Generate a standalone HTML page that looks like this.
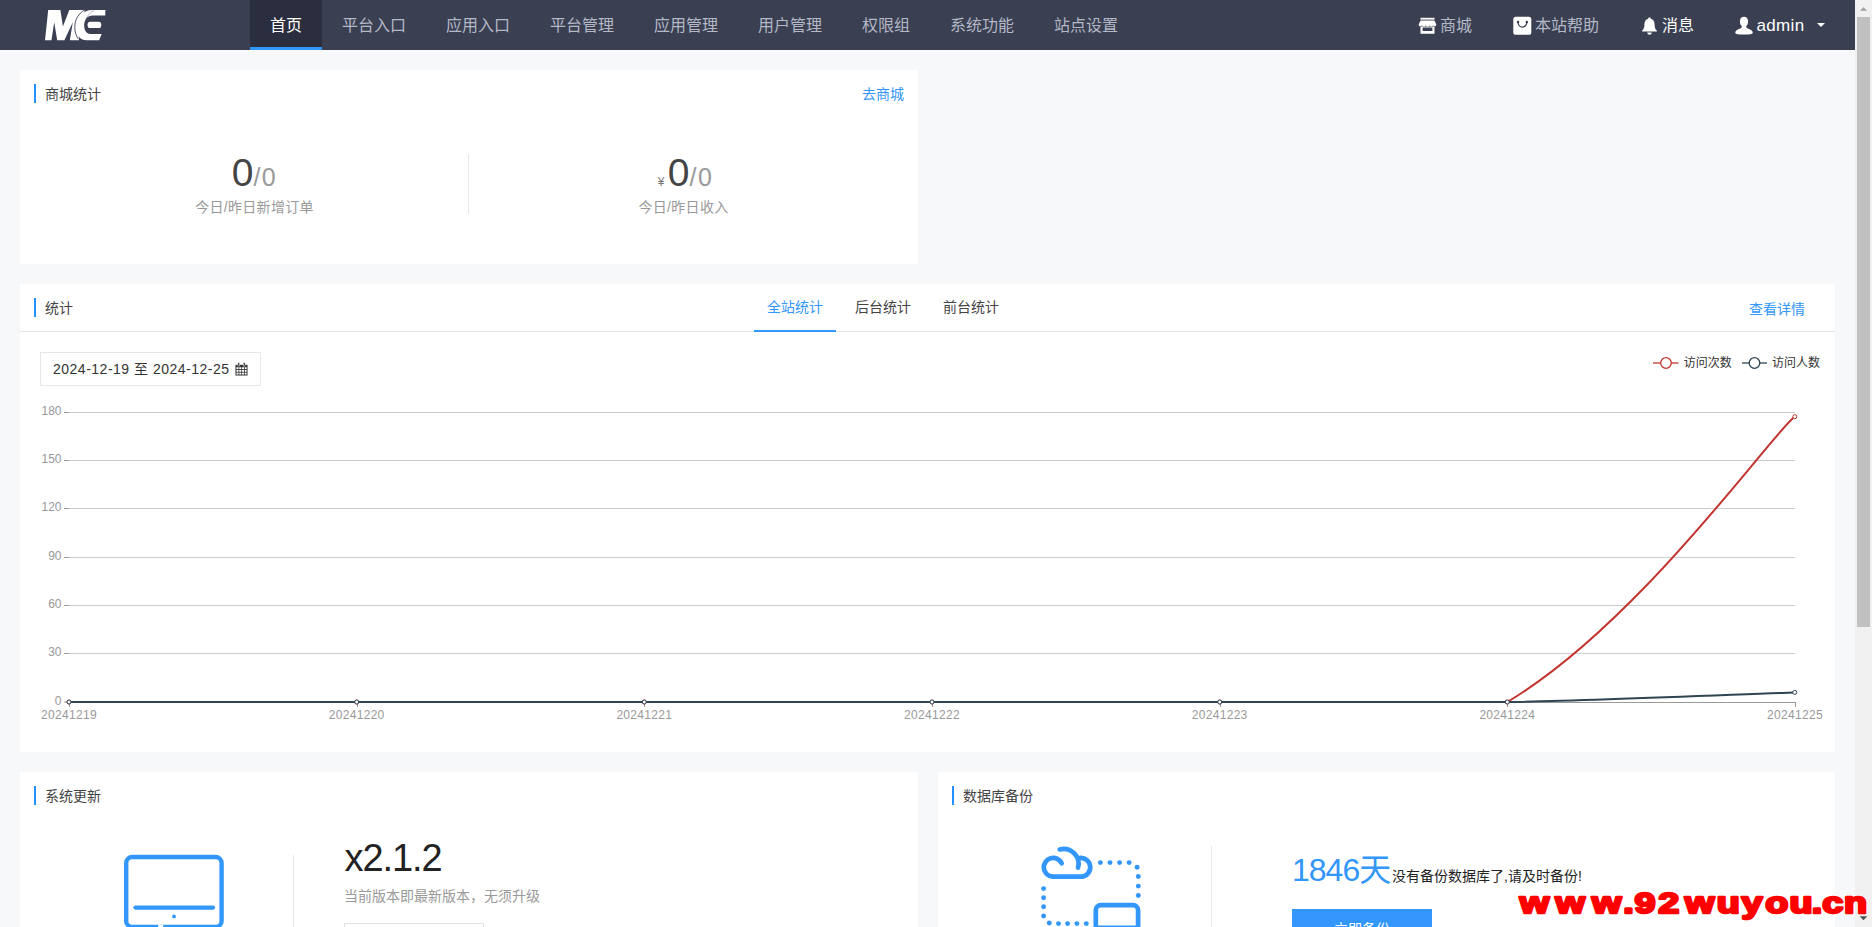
<!DOCTYPE html>
<html lang="zh-CN">
<head>
<meta charset="utf-8">
<title>首页</title>
<style>
*{box-sizing:border-box;margin:0;padding:0}
html,body{width:1872px;height:927px;overflow:hidden;background:#f7f8fa;}
body{font-family:"Liberation Sans","Noto Sans CJK SC",sans-serif;font-size:14px;color:#333;position:relative}
a{text-decoration:none;color:#3296fa}
.abs{position:absolute}
/* navbar */
#nav{position:absolute;left:0;top:0;width:1855px;height:50px;background:#3a3f51;}
#nav .item{position:absolute;top:0;height:50px;line-height:52px;font-size:16px;color:#b4b8c7;white-space:nowrap}
#nav .item.active{background:#2a2e3f;color:#fff;border-bottom:3px solid #3296fa;text-align:center}
#nav .r{color:#b4b8c7}
/* scrollbar */
#sb{position:absolute;left:1855px;top:0;width:17px;height:927px;background:#f1f1f1}
#sb .thumb{position:absolute;left:2px;width:13px;top:17px;height:610px;background:#c1c1c1}
/* cards */
.card{position:absolute;background:#fff}
.ttl{position:absolute;left:14px;top:14px;height:19px;line-height:20px;border-left:2px solid #2590ff;padding-left:9px;font-size:14px;color:#444;white-space:nowrap}
.t{position:absolute;white-space:nowrap}
.stat{position:absolute;top:79px;width:429px;height:48px;line-height:48px;text-align:center;white-space:nowrap;color:#999}
.stat .big{font-size:39px;color:#444}
.stat .sm{font-size:25px;color:#999;letter-spacing:1.5px}
.stat .yen{font-size:12px;color:#777;margin-right:3.5px}
.lbl{position:absolute;top:127px;width:429px;line-height:20px;text-align:center;color:#999;font-size:14px;white-space:nowrap;letter-spacing:.3px}
.vline{position:absolute;width:1px;background:#e6e6e6}
.hline{position:absolute;height:1px;background:#e6e6e6}
.tab{position:absolute;top:0;width:82px;height:48px;line-height:47px;text-align:center;font-size:14px;color:#444;white-space:nowrap}
.tab.on{color:#3296fa;border-bottom:2px solid #3296fa}
.date{position:absolute;left:20px;top:68px;width:221px;height:34px;border:1px solid #e6e6e6;line-height:32px;padding-left:12px;font-size:14px;color:#333;white-space:nowrap;letter-spacing:.5px}
#wm{position:absolute;left:0;top:860px;z-index:5}
.card{overflow:hidden}
</style>
</head>
<body>
<div id="nav">
  <svg class="abs" style="left:45px;top:10px" width="61" height="31" viewBox="0 0 61 31">
    <g fill="#fff">
      <path d="M3.2 0 L15.4 0 L17.9 16.4 L24.3 0 L40.2 0 L36 8 L33 20 L34 30.3 L24.8 30.3 L27.8 12.2 L19.4 30.3 L12.2 30.3 L9.2 12.2 L6.45 30.3 L0 30.3 Z"/>
      <path d="M60.4 0 L47 0 C38 0 30.4 8 30.4 17 C30.4 25.5 35.5 30.3 42 30.3 L54.1 30.3 L56.7 24 L45.2 24 C41.4 24 39.2 20.6 39.2 15.6 C39.2 9.6 42.6 5.6 47.6 5.6 L60.2 5.4 Z"/>
      <rect x="42.6" y="11.7" width="13.6" height="6.4" rx="2.6"/>
    </g>
    <path d="M39.9 -0.2 C33.4 3.4 29.6 10 29.8 17.6 C29.9 22 31 25.6 33 28.6" fill="none" stroke="#3a3f51" stroke-width="0.9"/>
    <path d="M49.2 0.4 C45.6 2 42.8 5 41 8.8" fill="none" stroke="#3a3f51" stroke-width="0.5" opacity=".7"/>
  </svg>
  <div class="item active" style="left:250px;width:72px">首页</div>
  <div class="item" style="left:342px">平台入口</div>
  <div class="item" style="left:446px">应用入口</div>
  <div class="item" style="left:550px">平台管理</div>
  <div class="item" style="left:654px">应用管理</div>
  <div class="item" style="left:758px">用户管理</div>
  <div class="item" style="left:862px">权限组</div>
  <div class="item" style="left:950px">系统功能</div>
  <div class="item" style="left:1054px">站点设置</div>
  <!-- store icon -->
  <svg class="abs" style="left:1418px;top:17px" width="19" height="18" viewBox="0 0 19 18">
    <rect x="2.5" y="0.8" width="14" height="1.8" fill="#fff"/>
    <path d="M2.6 3.4 L16.4 3.4 L18.3 7.4 C18.3 9.6 15.6 9.8 15.1 8.2 C14.6 9.8 11.9 9.8 11.4 8.2 C10.9 9.8 8.1 9.8 7.6 8.2 C7.1 9.8 4.4 9.8 3.9 8.2 C3.4 9.8 0.7 9.6 0.7 7.4 Z" fill="#fff"/>
    <path d="M2.5 9.6 L16.5 9.6 L16.5 16.8 L2.5 16.8 Z M4.6 10.4 L4.6 14 L14.4 14 L14.4 10.4 Z" fill="#fff" fill-rule="evenodd"/>
  </svg>
  <div class="item r" style="left:1440px">商城</div>
  <!-- bag icon -->
  <svg class="abs" style="left:1513px;top:16px" width="19" height="19" viewBox="0 0 19 19">
    <rect x="0.3" y="0.8" width="18" height="18" rx="2.6" fill="#fff"/>
    <path d="M5 6 C5 12.8 13.8 12.8 13.8 6" fill="none" stroke="#3a3f51" stroke-width="1.3" stroke-linecap="round"/>
    <circle cx="5" cy="5.9" r="1.25" fill="#3a3f51"/><circle cx="13.8" cy="5.9" r="1.25" fill="#3a3f51"/>
  </svg>
  <div class="item r" style="left:1535px">本站帮助</div>
  <!-- bell icon -->
  <svg class="abs" style="left:1641px;top:17px" width="17" height="18" viewBox="0 0 17 18">
    <path d="M8.5 0.6 C9.3 0.6 9.8 1.1 9.8 1.8 C12.4 2.5 13.6 4.6 13.6 7.4 C13.6 10.6 14.4 12.4 15.9 13.6 L15.9 14.6 L1.1 14.6 L1.1 13.6 C2.6 12.4 3.4 10.6 3.4 7.4 C3.4 4.6 4.6 2.5 7.2 1.8 C7.2 1.1 7.7 0.6 8.5 0.6 Z" fill="#fff"/>
    <path d="M6.3 15.4 L10.7 15.4 C10.7 16.7 9.7 17.7 8.5 17.7 C7.3 17.7 6.3 16.7 6.3 15.4 Z" fill="#fff"/>
  </svg>
  <div class="item r" style="left:1662px;color:#fff">消息</div>
  <!-- user icon -->
  <svg class="abs" style="left:1735px;top:16px" width="18" height="19" viewBox="0 0 18 19">
    <path d="M9 0.8 C11.5 0.8 13.1 2.7 13.1 5.4 C13.1 7.4 12.3 9.2 11.2 10.2 C11.2 11.6 11.6 12.1 13.4 12.8 C15.8 13.7 17.6 14.6 17.7 16.6 C17.7 18 16.6 18.6 9 18.6 C1.4 18.6 0.3 18 0.3 16.6 C0.4 14.6 2.2 13.7 4.6 12.8 C6.4 12.1 6.8 11.6 6.8 10.2 C5.7 9.2 4.9 7.4 4.9 5.4 C4.9 2.7 6.5 0.8 9 0.8 Z" fill="#fff"/>
  </svg>
  <div class="item r" style="left:1756.5px;color:#fff;font-size:17px;letter-spacing:.35px">admin</div>
  <svg class="abs" style="left:1817px;top:23px" width="8" height="4" viewBox="0 0 8 4"><path d="M0 0 L8 0 L4 4 Z" fill="#fff"/></svg>
</div>

<!-- card 1 -->
<div class="card" id="c1" style="left:20px;top:70px;width:898px;height:194px">
  <div class="ttl">商城统计</div>
  <a class="t" style="right:14px;top:15px;line-height:18px">去商城</a>
  <div class="stat" style="left:20px"><span class="big">0</span><span class="sm">/0</span></div>
  <div class="lbl" style="left:20px">今日/昨日新增订单</div>
  <div class="vline" style="left:448px;top:84px;height:60px"></div>
  <div class="stat" style="left:449px;padding-left:4px"><span class="yen">¥</span><span class="big">0</span><span class="sm">/0</span></div>
  <div class="lbl" style="left:449px">今日/昨日收入</div>
</div>

<!-- card 2 -->
<div class="card" id="c2" style="left:20px;top:284px;width:1815px;height:468px">
  <div class="ttl">统计</div>
  <div class="hline" style="left:0;top:47px;width:1815px"></div>
  <div class="tab on" style="left:734px">全站统计</div>
  <div class="tab" style="left:822px">后台统计</div>
  <div class="tab" style="left:910px">前台统计</div>
  <a class="t" style="left:1729px;top:15px;line-height:20px">查看详情</a>
  <div class="date"><span>2024-12-19 至 2024-12-25</span>
    <svg class="abs" style="left:194px;top:9px" width="13" height="14" viewBox="0 0 14 15" preserveAspectRatio="none">
      <path d="M0.5 3 L13.5 3 L13.5 14.5 L0.5 14.5 Z" fill="#333"/>
      <g fill="#fff"><rect x="1.6" y="5.6" width="2.2" height="2"/><rect x="4.6" y="5.6" width="2.2" height="2"/><rect x="7.6" y="5.6" width="2.2" height="2"/><rect x="10.6" y="5.6" width="1.9" height="2"/>
      <rect x="1.6" y="8.5" width="2.2" height="2"/><rect x="4.6" y="8.5" width="2.2" height="2"/><rect x="7.6" y="8.5" width="2.2" height="2"/><rect x="10.6" y="8.5" width="1.9" height="2"/>
      <rect x="1.6" y="11.4" width="2.2" height="2"/><rect x="4.6" y="11.4" width="2.2" height="2"/><rect x="7.6" y="11.4" width="2.2" height="2"/><rect x="10.6" y="11.4" width="1.9" height="2"/></g>
      <rect x="3" y="0.6" width="2" height="4" rx="1" fill="#333" stroke="#fff" stroke-width=".6"/><rect x="9" y="0.6" width="2" height="4" rx="1" fill="#333" stroke="#fff" stroke-width=".6"/>
    </svg>
  </div>
<svg class="abs" style="left:0;top:56px" width="1815" height="412" viewBox="20 340 1815 412" font-family="Liberation Sans, Noto Sans CJK SC, sans-serif" font-size="12" fill="#999">
<line x1="69" x2="1795" y1="412.5" y2="412.5" stroke="#ccc" stroke-width="1"/>
<line x1="64" x2="69" y1="412.5" y2="412.5" stroke="#999" stroke-width="1"/>
<text x="61.5" y="415.0" text-anchor="end">180</text>
<line x1="69" x2="1795" y1="460.5" y2="460.5" stroke="#ccc" stroke-width="1"/>
<line x1="64" x2="69" y1="460.5" y2="460.5" stroke="#999" stroke-width="1"/>
<text x="61.5" y="463.0" text-anchor="end">150</text>
<line x1="69" x2="1795" y1="508.5" y2="508.5" stroke="#ccc" stroke-width="1"/>
<line x1="64" x2="69" y1="508.5" y2="508.5" stroke="#999" stroke-width="1"/>
<text x="61.5" y="511.0" text-anchor="end">120</text>
<line x1="69" x2="1795" y1="557.5" y2="557.5" stroke="#ccc" stroke-width="1"/>
<line x1="64" x2="69" y1="557.5" y2="557.5" stroke="#999" stroke-width="1"/>
<text x="61.5" y="560.0" text-anchor="end">90</text>
<line x1="69" x2="1795" y1="605.5" y2="605.5" stroke="#ccc" stroke-width="1"/>
<line x1="64" x2="69" y1="605.5" y2="605.5" stroke="#999" stroke-width="1"/>
<text x="61.5" y="608.0" text-anchor="end">60</text>
<line x1="69" x2="1795" y1="653.5" y2="653.5" stroke="#ccc" stroke-width="1"/>
<line x1="64" x2="69" y1="653.5" y2="653.5" stroke="#999" stroke-width="1"/>
<text x="61.5" y="656.0" text-anchor="end">30</text>
<line x1="64" x2="69" y1="702" y2="702" stroke="#999" stroke-width="1"/>
<line x1="69" x2="1795" y1="702.5" y2="702.5" stroke="#999" stroke-width="1"/>
<text x="61.5" y="705" text-anchor="end">0</text>
<line x1="69.5" x2="69.5" y1="702" y2="707" stroke="#999" stroke-width="1"/>
<text x="69.0" y="719" text-anchor="middle" letter-spacing="0.3">20241219</text>
<line x1="357.5" x2="357.5" y1="702" y2="707" stroke="#999" stroke-width="1"/>
<text x="356.7" y="719" text-anchor="middle" letter-spacing="0.3">20241220</text>
<line x1="644.5" x2="644.5" y1="702" y2="707" stroke="#999" stroke-width="1"/>
<text x="644.3" y="719" text-anchor="middle" letter-spacing="0.3">20241221</text>
<line x1="932.5" x2="932.5" y1="702" y2="707" stroke="#999" stroke-width="1"/>
<text x="932.0" y="719" text-anchor="middle" letter-spacing="0.3">20241222</text>
<line x1="1220.5" x2="1220.5" y1="702" y2="707" stroke="#999" stroke-width="1"/>
<text x="1219.7" y="719" text-anchor="middle" letter-spacing="0.3">20241223</text>
<line x1="1507.5" x2="1507.5" y1="702" y2="707" stroke="#999" stroke-width="1"/>
<text x="1507.3" y="719" text-anchor="middle" letter-spacing="0.3">20241224</text>
<line x1="1795.5" x2="1795.5" y1="702" y2="707" stroke="#999" stroke-width="1"/>
<text x="1795.0" y="719" text-anchor="middle" letter-spacing="0.3">20241225</text>
<path d="M69 702 L1507.3 702 C1639.8 623.1 1774.3 430.4 1794.8 416.7" fill="none" stroke="#c23531" stroke-width="2" stroke-linejoin="round"/>
<circle cx="69.0" cy="702" r="2" fill="#fff" stroke="#c23531" stroke-width="1"/>
<circle cx="356.7" cy="702" r="2" fill="#fff" stroke="#c23531" stroke-width="1"/>
<circle cx="644.3" cy="702" r="2" fill="#fff" stroke="#c23531" stroke-width="1"/>
<circle cx="932.0" cy="702" r="2" fill="#fff" stroke="#c23531" stroke-width="1"/>
<circle cx="1219.7" cy="702" r="2" fill="#fff" stroke="#c23531" stroke-width="1"/>
<circle cx="1507.3" cy="702" r="2" fill="#fff" stroke="#c23531" stroke-width="1"/>
<circle cx="1794.8" cy="416.7" r="2" fill="#fff" stroke="#c23531" stroke-width="1"/>
<path d="M69 702 L1507.3 702 C1593.7 700.6 1750 693.8 1794.8 692.4" fill="none" stroke="#2f4554" stroke-width="2" stroke-linejoin="round"/>
<circle cx="69.0" cy="702" r="2" fill="#fff" stroke="#2f4554" stroke-width="1"/>
<circle cx="356.7" cy="702" r="2" fill="#fff" stroke="#2f4554" stroke-width="1"/>
<circle cx="644.3" cy="702" r="2" fill="#fff" stroke="#2f4554" stroke-width="1"/>
<circle cx="932.0" cy="702" r="2" fill="#fff" stroke="#2f4554" stroke-width="1"/>
<circle cx="1219.7" cy="702" r="2" fill="#fff" stroke="#2f4554" stroke-width="1"/>
<circle cx="1507.3" cy="702" r="2" fill="#fff" stroke="#2f4554" stroke-width="1"/>
<circle cx="1794.8" cy="692.4" r="2" fill="#fff" stroke="#2f4554" stroke-width="1"/>
<line x1="1653" x2="1678.5" y1="363" y2="363" stroke="#c23531" stroke-width="1.3"/><circle cx="1666" cy="363" r="5.3" fill="#fff" stroke="#c23531" stroke-width="1.3"/>
<text x="1683.8" y="366.6" fill="#333" style="font-size:12px">访问次数</text>
<line x1="1742" x2="1767" y1="363" y2="363" stroke="#2f4554" stroke-width="1.3"/><circle cx="1754.5" cy="363" r="5.3" fill="#fff" stroke="#2f4554" stroke-width="1.3"/>
<text x="1772" y="366.6" fill="#333" style="font-size:12px">访问人数</text>
</svg>
</div>

<!-- card 3 -->
<div class="card" id="c3" style="left:20px;top:772px;width:898px;height:155px">
  <div class="ttl">系统更新</div>
  <svg class="abs" style="left:100px;top:78px" width="110" height="77" viewBox="120 850 110 77">
    <rect x="126.2" y="857" width="95.4" height="70" rx="6" fill="none" stroke="#3296fa" stroke-width="4.4"/>
    <line x1="135.5" x2="213" y1="907.6" y2="907.6" stroke="#3296fa" stroke-width="4.2" stroke-linecap="round"/>
    <circle cx="174" cy="916.4" r="1.9" fill="#3296fa"/>
    <rect x="158.2" y="924.6" width="5" height="3" fill="#fff"/>
  </svg>
  <div class="vline" style="left:273px;top:83px;height:72px"></div>
  <div class="t" style="left:324.5px;top:62px;line-height:48px;font-size:38px;color:#222;letter-spacing:-1.1px">x2.1.2</div>
  <div class="t" style="left:324px;top:114px;line-height:20px;font-size:14px;color:#999">当前版本即最新版本，无须升级</div>
  <div class="abs" style="left:324px;top:151px;width:140px;height:10px;border:1px solid #e2e2e2"></div>
</div>

<!-- card 4 -->
<div class="card" id="c4" style="left:938px;top:772px;width:897px;height:155px">
  <div class="ttl">数据库备份</div>
  <svg class="abs" style="left:92px;top:68px" width="120" height="87" viewBox="1030 840 120 87">
    <g fill="#3296fa"><circle cx="1100.4" cy="862.6" r="2.45"/><circle cx="1110" cy="862.6" r="2.45"/><circle cx="1119.6" cy="862.6" r="2.45"/><circle cx="1129.1" cy="862.6" r="2.45"/><circle cx="1137.1" cy="867.2" r="2.45"/><circle cx="1138.3" cy="876.5" r="2.45"/><circle cx="1138.3" cy="886.1" r="2.45"/><circle cx="1138.3" cy="895.5" r="2.45"/><circle cx="1043.6" cy="888.6" r="2.45"/><circle cx="1043.6" cy="897.7" r="2.45"/><circle cx="1043.6" cy="906.8" r="2.45"/><circle cx="1043.6" cy="916" r="2.45"/><circle cx="1049.3" cy="923" r="2.45"/><circle cx="1058.5" cy="923.6" r="2.45"/><circle cx="1067.6" cy="923.6" r="2.45"/><circle cx="1076.9" cy="923.6" r="2.45"/><circle cx="1086.3" cy="923.6" r="2.45"/></g>
    <g fill="none" stroke="#3296fa" stroke-width="4.7" stroke-linecap="round" stroke-linejoin="round">
      <path d="M1061.7 863.3 A9.4 9.4 0 1 0 1052.7 876.7 L1081.5 876.7 A9.4 9.4 0 0 0 1080.2 857.9"/>
      <path d="M1059.7 849.4 A14.9 14.9 0 0 1 1078 867.7"/>
      <rect x="1095.8" y="905.2" width="42.3" height="30" rx="5"/>
      <line x1="1096" x2="1138" y1="926.8" y2="926.8" stroke-width="2.4" stroke-linecap="butt"/>
    </g>
  </svg>
  <div class="vline" style="left:273px;top:74px;height:81px"></div>
  <div class="t" style="left:354px;top:74px;line-height:48px;font-size:32px;color:#3296fa;letter-spacing:-1px">1846天</div>
  <div class="t" style="left:454px;top:94px;line-height:20px;font-size:14px;color:#222">没有备份数据库了,请及时备份!</div>
  <div class="abs" style="left:354px;top:137px;width:140px;height:38px;background:#3296fa;color:#fff;text-align:center;line-height:40px;font-size:14px">立即备份</div>
</div>

<div id="sb"><div class="thumb"></div>
  <svg class="abs" style="left:0;top:0" width="17" height="17" viewBox="0 0 17 17"><path d="M5 10.8 L12 10.8 L8.5 6.9 Z" fill="#a3a3a3"/></svg>
  <svg class="abs" style="left:0;top:910px" width="17" height="17" viewBox="0 0 17 17"><path d="M4.6 6.2 L12.4 6.2 L8.5 10.2 Z" fill="#505050"/></svg>
</div>
<svg id="wm" width="1872" height="67" viewBox="0 860 1872 67"><text transform="translate(0 912.5) scale(1.260 1)" x="1206.06 1234.50 1263.46 1288.37 1297.15 1316.08 1337.24 1362.52 1382.05 1401.10 1420.16 1437.84 1446.20 1463.44" y="0" font-family="Liberation Sans, sans-serif" font-weight="bold" font-size="30.0" fill="#fe0000" stroke="#fe0000" stroke-width="2.5" stroke-linejoin="round">www.92wuyou.cn</text></svg>
</body>
</html>
